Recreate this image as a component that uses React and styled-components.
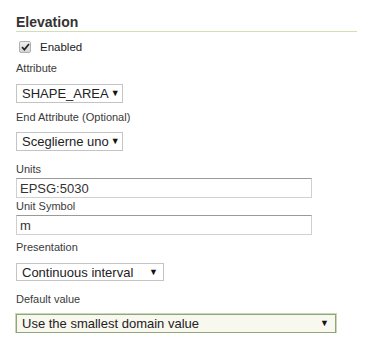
import React from "react";
import styled, { createGlobalStyle } from "styled-components";

const Global = createGlobalStyle`
  html, body { margin: 0; padding: 0; background: #ffffff; }
  body { font-family: "Liberation Sans", Arial, sans-serif; color: #333; }
`;

const Panel = styled.div`
  display: flex;
  flex-direction: column;
  align-items: flex-start;
  padding: 14px 0 0 16px;
  width: 341px;
`;

const Title = styled.h3`
  margin: 0;
  align-self: stretch;
  font-size: 14px;
  font-weight: bold;
  line-height: 16px;
  color: #333;
  padding-bottom: 1px;
  border-bottom: 1px solid #cfe1b3;
`;

const CheckRow = styled.label`
  display: flex;
  align-items: center;
  gap: 9px;
  margin: 9px 0 0 3px;
  font-size: 11.5px;
  line-height: 12px;
  color: #222;
`;

const CheckBox = styled.span`
  display: inline-flex;
  align-items: center;
  justify-content: center;
  width: 10px;
  height: 10px;
  border: 1px solid #b0b0b0;
  border-radius: 2px;
  background: linear-gradient(#f0f0f0, #d4d4d4);
`;

const Label = styled.div`
  margin-top: ${(p) => p.$mt}px;
  font-size: 11px;
  line-height: 13px;
  color: #3a3a3a;
`;

const Select = styled.div`
  margin-top: ${(p) => p.$mt}px;
  box-sizing: border-box;
  width: ${(p) => p.$w}px;
  height: ${(p) => p.$h}px;
  display: flex;
  align-items: center;
  justify-content: space-between;
  gap: 2px;
  white-space: nowrap;
  padding: 0 4px 0 5px;
  font-size: 13px;
  color: #222;
  background: ${(p) => (p.$active ? "#f8f8ee" : "#fff")};
  border: 1px solid ${(p) => (p.$active ? "#8fa57a" : "#c4c4c4")};
  box-shadow: ${(p) => (p.$active ? "0 0 0 1px #c9d8b8" : "none")};
`;

const Arrow = styled.span`
  font-size: 9px;
  line-height: 1;
  color: #111;
  padding-right: ${(p) => p.$pr || 0}px;
`;

const Input = styled.div`
  margin-top: ${(p) => p.$mt}px;
  box-sizing: border-box;
  width: 296px;
  height: 20px;
  display: flex;
  align-items: center;
  padding-left: 3px;
  font-size: 13px;
  color: #333;
  background: #fff;
  border: 1px solid #d0d0d0;
  border-top-color: #9a9a9a;
`;

export default function App() {
  return (
    <>
      <Global />
      <Panel>
        <Title>Elevation</Title>
        <CheckRow>
          <CheckBox>
            <svg width="9" height="8" viewBox="0 0 9 8">
              <path d="M1 4.2 L3.4 6.6 L8 1" fill="none" stroke="#2a2a2a" strokeWidth="1.8" />
            </svg>
          </CheckBox>
          Enabled
        </CheckRow>
        <Label $mt={9}>Attribute</Label>
        <Select $mt={9} $w={107} $h={19}>
          SHAPE_AREA<Arrow>▼</Arrow>
        </Select>
        <Label $mt={8}>End Attribute (Optional)</Label>
        <Select $mt={8} $w={107} $h={19}>
          Sceglierne uno<Arrow>▼</Arrow>
        </Select>
        <Label $mt={12}>Units</Label>
        <Input $mt={2}>EPSG:5030</Input>
        <Label $mt={2}>Unit Symbol</Label>
        <Input $mt={2}>m</Input>
        <Label $mt={6}>Presentation</Label>
        <Select $mt={9} $w={148} $h={18}>
          Continuous interval<Arrow $pr={1}>▼</Arrow>
        </Select>
        <Label $mt={12}>Default value</Label>
        <Select $mt={8} $w={320} $h={19} $active>
          Use the smallest domain value<Arrow $pr={2}>▼</Arrow>
        </Select>
      </Panel>
    </>
  );
}
